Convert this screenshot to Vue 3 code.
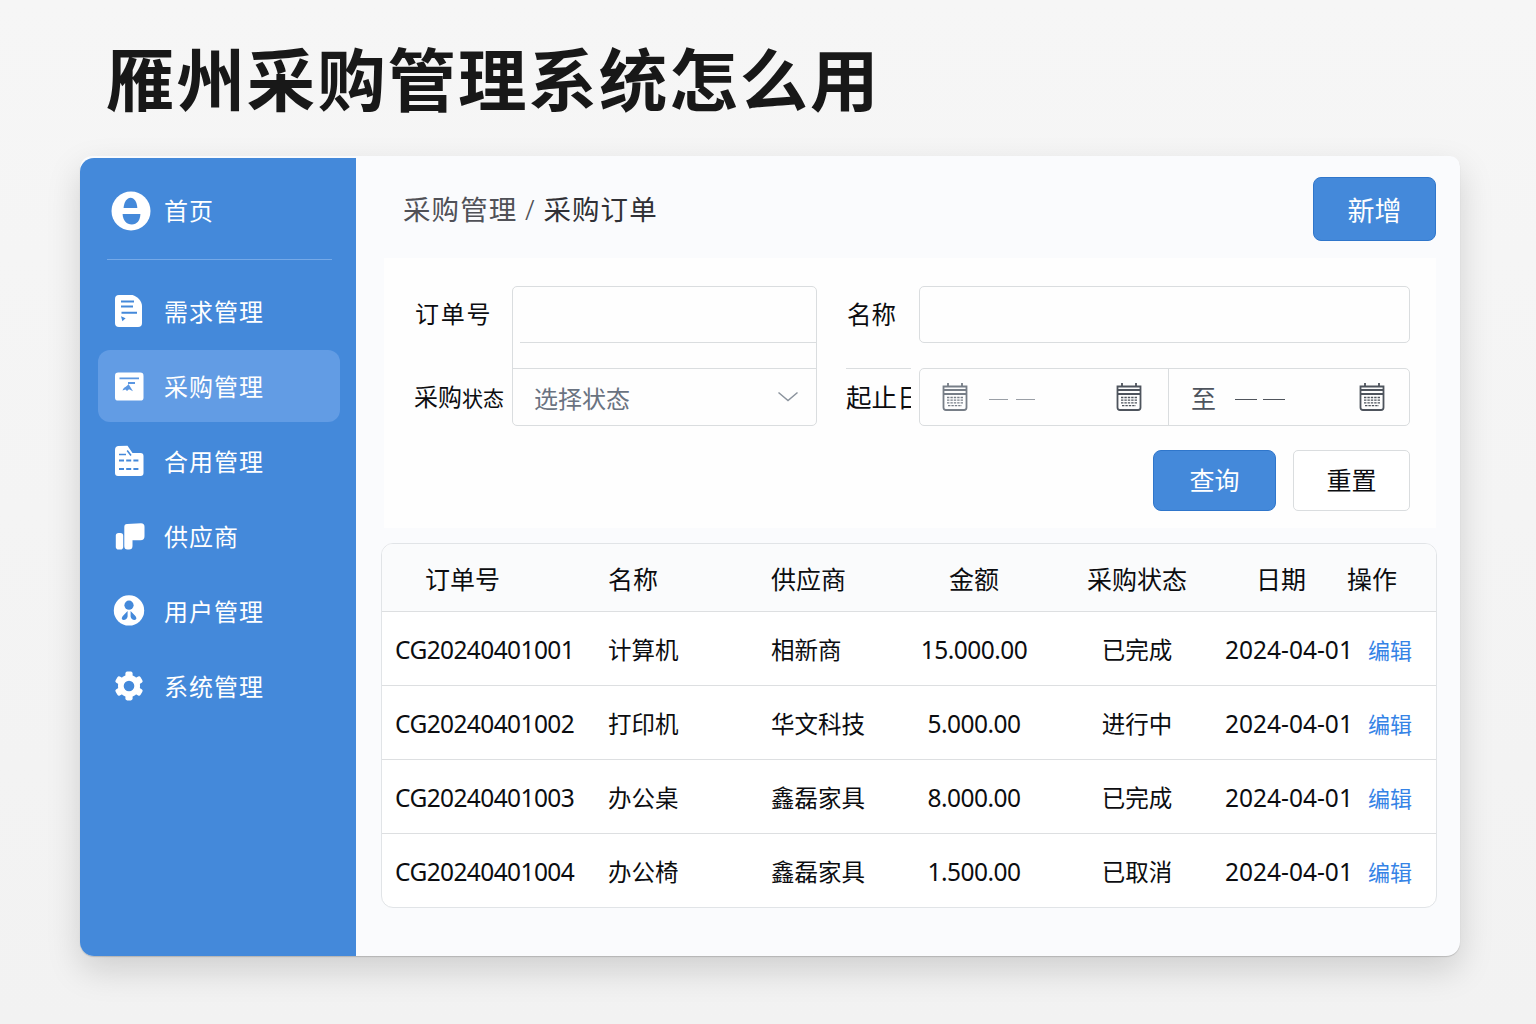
<template>
  <div class="page">
    <h1 class="title">雁州采购管理系统怎么用</h1>

    <div class="window">
      <aside class="sidebar">
        <div class="home">
          <svg class="home-icon" viewBox="0 0 40 40" width="40" height="40">
            <circle cx="20" cy="20" r="19.5" fill="#fff" />
            <path d="M12.6 17C13 11 16 6.8 19.6 6.8S26 11 26.3 17Z" fill="#4489da" />
            <path d="M11.6 23H29.4C29.2 29.5 26 33.4 20.8 33.4C15.6 33.4 12 30 11.6 23Z" fill="#4489da" />
          </svg>
          <span>首页</span>
        </div>

        <nav class="menu">
          <a
            v-for="item in menu"
            :key="item.icon"
            class="menu-item"
            :class="{ active: item.icon === current }"
            @click="current = item.icon"
          >
            <svg class="menu-icon" viewBox="0 0 32 32" width="32" height="32">
              <g v-if="item.icon === 'demand'">
                <path d="M6 0H19.5C24.5 1.5 29 6 29 11V28Q29 32 25 32H6Q2 32 2 28V4Q2 0 6 0Z" fill="#fff" />
                <path d="M8 6.4H21M8 11.5H20M8.5 17.8H24" stroke="#4489da" stroke-width="2" />
                <path d="M8 21.3L12.6 23.2L9.4 26.2Z" fill="#4489da" />
              </g>
              <g v-else-if="item.icon === 'purchase'">
                <rect x="2" y="2.6" width="28.5" height="28" rx="3.2" fill="#fff" />
                <path d="M6.5 8.4H26M15 13H22" stroke="#5b97e2" stroke-width="1.9" />
                <path d="M9.5 20.6C10.5 17 13 17.5 15.5 14L20 21.2L16 19.3L14 21L12.5 19.4Z" fill="#5b97e2" />
              </g>
              <g v-else-if="item.icon === 'contract'">
                <path d="M5 1L14.5 .8L19.5 8H27.5Q30.5 8 30.5 11V28Q30.5 31 27.5 31H5Q2 31 2 28V5Q2 1.5 5 1Z" fill="#fff" />
                <path d="M6 9.5H13M14.2 5.5L18 10.4" stroke="#4489da" stroke-width="1.6" />
                <path d="M6 15.5H25.5M6 24H25.5" stroke="#4489da" stroke-width="2" stroke-dasharray="5 2.2" />
              </g>
              <g v-else-if="item.icon === 'supplier'" fill="#fff">
                <rect x="2.8" y="13" width="7.4" height="16.5" rx="2.8" />
                <path d="M14 4L28 3.3Q31.5 3.3 31.5 6.8V16.3Q31.5 20.3 27.5 20.3H19.5V26Q19.5 29.6 16 29.6H14.5Q11.3 29.6 11.3 26V7Q11.3 4 14 4Z" />
              </g>
              <g v-else-if="item.icon === 'user'">
                <circle cx="16" cy="15.4" r="15.2" fill="#fff" />
                <circle cx="16" cy="10.2" r="4.6" fill="#4489da" />
                <path d="M14.6 16V21.5Q14 24.6 10.4 25Q7.6 24.4 9.6 21.2ZM17.6 16V21.5Q18.2 24.6 21.6 25Q24.6 24.4 22.6 21.2Z" fill="#4489da" />
              </g>
              <g v-else>
                <g fill="#fff">
                  <circle cx="16" cy="16" r="11" />
                  <rect
                    v-for="angle in [0, 60, 120, 180, 240, 300]"
                    :key="angle"
                    x="12.4"
                    y="1.6"
                    width="7.2"
                    height="7"
                    rx="1.8"
                    :transform="`rotate(${angle} 16 16)`"
                  />
                </g>
                <circle cx="16" cy="16" r="5.3" fill="#4489da" />
              </g>
            </svg>
            <span>{{ item.label }}</span>
          </a>
        </nav>
      </aside>

      <main class="main">
        <header class="topbar">
          <div class="crumbs">
            <span class="crumb-parent">采购管理</span>
            <span class="slash">/</span>
            <span>采购订单</span>
          </div>
          <button class="btn btn-add">新增</button>
        </header>

        <section class="filters">
          <div class="fields">
            <div class="labels labels-left">
              <label>订单号</label>
              <label class="narrow">采购<small>状态</small></label>
            </div>
            <div class="stack">
              <input v-model="orderNo" class="stack-input" />
              <div class="stack-gap"></div>
              <div class="select">
                <span>选择状态</span>
                <svg viewBox="0 0 22 12" width="22" height="12">
                  <path d="M1.5 1.5L11 9.5L20.5 1.5" fill="none" stroke="#8b939d" stroke-width="1.5" />
                </svg>
              </div>
            </div>
            <div class="labels labels-right">
              <label class="label-name">名称</label>
              <label class="clipped">起止日</label>
            </div>
            <div class="right-fields">
              <input v-model="name" class="name-input" />
              <div class="range">
                <div class="range-part range-start">
                  <svg class="calendar light" viewBox="0 0 26 30" width="26" height="30">
                    <path :d="calendarFrame" fill="none" stroke="currentColor" stroke-width="1.8" />
                    <path :d="calendarDays" fill="none" stroke="currentColor" stroke-width="1.3" stroke-dasharray="2.4 1" />
                  </svg>
                  <i class="dash"></i><i class="dash"></i>
                  <svg class="calendar last" viewBox="0 0 26 30" width="26" height="30">
                    <path :d="calendarFrame" fill="none" stroke="currentColor" stroke-width="1.8" />
                    <path :d="calendarDays" fill="none" stroke="currentColor" stroke-width="1.3" stroke-dasharray="2.4 1" />
                  </svg>
                </div>
                <div class="range-part range-end">
                  <span class="to">至</span>
                  <i class="dash dark"></i><i class="dash dark"></i>
                  <svg class="calendar last" viewBox="0 0 26 30" width="26" height="30">
                    <path :d="calendarFrame" fill="none" stroke="currentColor" stroke-width="1.8" />
                    <path :d="calendarDays" fill="none" stroke="currentColor" stroke-width="1.3" stroke-dasharray="2.4 1" />
                  </svg>
                </div>
              </div>
            </div>
          </div>
          <div class="actions">
            <button class="btn btn-query">查询</button>
            <button class="btn btn-reset" @click="reset">重置</button>
          </div>
        </section>

        <section class="table">
          <div class="row head">
            <span class="col-no">订单号</span>
            <span>名称</span>
            <span>供应商</span>
            <span class="center">金额</span>
            <span class="center">采购状态</span>
            <span class="col-date">日期</span>
            <span class="col-op">操作</span>
          </div>
          <div v-for="order in orders" :key="order.no" class="row">
            <span class="number">{{ order.no }}</span>
            <span>{{ order.name }}</span>
            <span>{{ order.supplier }}</span>
            <span class="center amount">{{ order.amount }}</span>
            <span class="center">{{ order.status }}</span>
            <span class="date">{{ order.date }}</span>
            <a class="edit">编辑</a>
          </div>
        </section>
      </main>
    </div>
  </div>
</template>

<script setup>
import { ref } from 'vue'

const menu = [
  { icon: 'demand', label: '需求管理' },
  { icon: 'purchase', label: '采购管理' },
  { icon: 'contract', label: '合用管理' },
  { icon: 'supplier', label: '供应商' },
  { icon: 'user', label: '用户管理' },
  { icon: 'system', label: '系统管理' }
]

const orders = [
  { no: 'CG20240401001', name: '计算机', supplier: '相新商', amount: '15.000.00', status: '已完成', date: '2024-04-01' },
  { no: 'CG20240401002', name: '打印机', supplier: '华文科技', amount: '5.000.00', status: '进行中', date: '2024-04-01' },
  { no: 'CG20240401003', name: '办公桌', supplier: '鑫磊家具', amount: '8.000.00', status: '已完成', date: '2024-04-01' },
  { no: 'CG20240401004', name: '办公椅', supplier: '鑫磊家具', amount: '1.500.00', status: '已取消', date: '2024-04-01' }
]

const calendarFrame = 'M1.5 4.5H24.5V25.5Q24.5 28 22 28H4Q1.5 28 1.5 25.5ZM1.5 8H24.5M1.5 12H24.5M6 1V4.5M20 1V4.5'
const calendarDays = 'M5 15.5H21M5 18.2H21M5 20.9H21M6 23.6H20'

const current = ref('purchase')
const orderNo = ref('')
const name = ref('')

const reset = () => {
  orderNo.value = ''
  name.value = ''
}
</script>

<style>
body {
  margin: 0;
  background: #f4f4f4;
}
</style>

<style scoped>
.page {
  box-sizing: border-box;
  height: 1024px;
  padding: 31px 76px 0 80px;
  overflow: hidden;
  background: linear-gradient(#f6f6f6, #f2f2f2);
  color: #0c0d10;
  font-family: "Noto Sans", "Noto Sans CJK SC", sans-serif;
  font-size: 24px;
}

.title {
  height: 125px;
  margin: 0 0 0 26px;
  color: #181818;
  font-family: "Noto Sans CJK SC", sans-serif;
  font-size: 68.5px;
  font-weight: 700;
  letter-spacing: 1.9px;
  line-height: 92px;
  white-space: nowrap;
}

.window {
  display: flex;
  height: 800px;
  border-radius: 12px 10px 14px 14px;
  background: #fafbfd;
  box-shadow: 0 1px 1px rgba(0, 0, 0, 0.16), 0 14px 34px rgba(0, 0, 0, 0.15);
}

.sidebar {
  box-sizing: border-box;
  flex: none;
  width: 276px;
  height: 798px;
  margin-top: 2px;
  border-radius: 14px 0 0 14px;
  background: #4489da;
  color: #fff;
  font-size: 24px;
  letter-spacing: 1px;
}

.home {
  display: flex;
  align-items: center;
  box-sizing: border-box;
  width: 225px;
  height: 102px;
  margin-left: 27px;
  padding: 4px 0 0 4px;
  border-bottom: 1px solid #75a9e8;
}

.home span {
  margin: -2px 0 0 13px;
}

.menu {
  display: flex;
  flex-direction: column;
  gap: 3px;
  padding: 15px 16px 0 18px;
}

.menu-item {
  display: flex;
  align-items: center;
  height: 72px;
  padding-left: 15px;
  border-radius: 12px;
  cursor: pointer;
}

.menu-item.active {
  background: #629ce4;
}

.menu-item span {
  margin: -2px 0 0 19px;
}

.main {
  flex: 1;
  min-width: 0;
  padding: 0 24px 0 25px;
}

.topbar {
  display: flex;
  justify-content: space-between;
  height: 102px;
  padding-left: 22px;
}

.crumbs {
  display: flex;
  color: #303136;
  font-size: 27.5px;
  letter-spacing: 1.1px;
  line-height: 108px;
}

.crumb-parent {
  color: #505157;
}

.slash {
  width: 26px;
  color: #505157;
  font-weight: 300;
  text-align: center;
}

.btn {
  box-sizing: border-box;
  padding: 0 0 3px;
  border: 1px solid #2f76cb;
  border-radius: 8px;
  background: #4489da;
  color: #fff;
  font-family: inherit;
  font-size: 25px;
  cursor: pointer;
}

.btn-add {
  width: 123px;
  height: 64px;
  margin-top: 21px;
  padding: 0;
  font-size: 27px;
}

.filters {
  height: 270px;
  margin-left: 3px;
  background: #fefefe;
}

.fields {
  display: flex;
  height: 140px;
  padding: 28px 26px 0 31px;
}

.labels {
  display: flex;
  flex-direction: column;
  gap: 25px;
  white-space: nowrap;
}

.labels label {
  display: block;
  box-sizing: border-box;
  height: 58px;
  line-height: 57px;
}

.labels-left {
  width: 97px;
  letter-spacing: 1.8px;
}

.labels-left small {
  font-size: 21px;
}

.labels-left label:first-child {
  height: 57px;
  line-height: 55px;
}

.labels-left .narrow {
  margin-left: -1px;
  letter-spacing: 0;
}

.labels-right {
  width: 72px;
  margin-left: 30px;
  font-size: 24.5px;
}

.labels-right .label-name {
  height: 57px;
}

/* the last label is cut off where the field begins */
.labels-right .clipped {
  width: 65px;
  margin-left: -1px;
  overflow: hidden;
  border-top: 1px solid #dadddf;
  font-size: 25.5px;
}

.stack {
  box-sizing: border-box;
  width: 305px;
  height: 140px;
  border: 1px solid #dadddf;
  border-radius: 5px;
}

.stack-input {
  display: block;
  box-sizing: border-box;
  width: 296px;
  height: 56px;
  margin-left: 7px;
  padding: 0 14px;
  border: 0;
  border-bottom: 1px solid #dadddf;
  outline: none;
  background: none;
  font: inherit;
}

.stack-gap {
  height: 25px;
  border-bottom: 1px solid #dadddf;
}

.select {
  display: flex;
  align-items: center;
  justify-content: space-between;
  height: 56px;
  padding: 0 17px 0 21px;
  color: #6a7381;
}

.right-fields {
  display: flex;
  flex-direction: column;
  gap: 25px;
  width: 491px;
}

.name-input {
  box-sizing: border-box;
  width: 491px;
  height: 57px;
  padding: 0 14px;
  border: 1px solid #dadddf;
  border-radius: 5px;
  outline: none;
  background: none;
  font: inherit;
}

.range {
  display: flex;
  box-sizing: border-box;
  height: 58px;
  border: 1px solid #dadddf;
  border-radius: 5px;
}

.range-part {
  display: flex;
  align-items: center;
  box-sizing: border-box;
  color: #4e545d;
}

.range-start {
  width: 249px;
  padding: 0 26px 0 22px;
  border-right: 1px solid #dadddf;
}

.range-end {
  flex: 1;
  padding: 0 24px 0 22px;
}

.calendar.light {
  margin-right: 13px;
  color: #777e87;
}

.calendar.last {
  margin-left: auto;
}

.dash {
  width: 19px;
  height: 1px;
  margin: 4px 0 0 8px;
  background: #9a9fa6;
}

.dash.dark {
  width: 22px;
  margin-left: 6px;
  background: #50555c;
}

.to {
  width: 38px;
  font-size: 25px;
}

.actions {
  display: flex;
  justify-content: flex-end;
  gap: 17px;
  padding: 24px 26px 0 0;
}

.btn-query {
  width: 123px;
  height: 61px;
}

.btn-reset {
  width: 117px;
  height: 61px;
  border-color: #dadddf;
  border-radius: 5px;
  background: #fff;
  color: #0c0d10;
}

.table {
  box-sizing: border-box;
  width: 1056px;
  height: 365px;
  margin-top: 15px;
  overflow: hidden;
  border: 1px solid #e1e4e7;
  border-radius: 12px;
  background: #fff;
}

.row {
  display: grid;
  grid-template-columns: 213px 163px 128px 150px 176px 143px 60px;
  align-items: center;
  box-sizing: border-box;
  height: 74px;
  padding-left: 13px;
  border-top: 1px solid #dddfe1;
  font-size: 23.5px;
  white-space: nowrap;
}

.row.head {
  height: 67px;
  border-top: 0;
  background: #fafbfc;
  font-size: 25px;
}

.center {
  text-align: center;
}

.col-no {
  padding-left: 30px;
}

.col-date {
  padding-left: 31px;
}

.col-op {
  margin-left: -21px;
}

.number,
.amount,
.date {
  padding-top: 2px;
  font-size: 24.5px;
}

.number {
  letter-spacing: -0.6px;
}

.amount {
  letter-spacing: -0.5px;
}

.edit {
  color: #3583e6;
  font-size: 22px;
  cursor: pointer;
}
</style>
